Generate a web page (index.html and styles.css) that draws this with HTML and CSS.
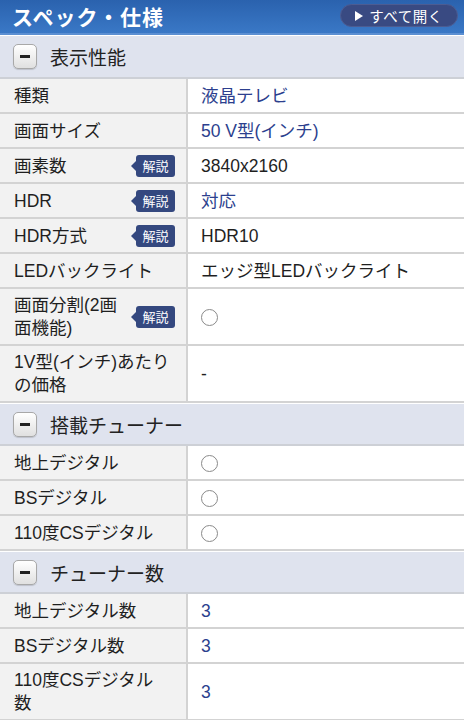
FILE: index.html
```html
<!DOCTYPE html>
<html lang="ja">
<head>
<meta charset="utf-8">
<link rel="stylesheet" href="styles.css">
</head>
<body>
<header class="topbar">
  <h1 class="title">スペック・仕様</h1>
  <button class="openall"><span class="tri"></span>すべて開く</button>
</header>

<section class="group">
  <div class="ghead first"><span class="minus"></span><span class="gtitle">表示性能</span></div>
  <div class="row"><div class="key">種類</div><div class="val link">液晶テレビ</div></div>
  <div class="row"><div class="key">画面サイズ</div><div class="val link">50 V型(インチ)</div></div>
  <div class="row"><div class="key">画素数<span class="badge">解説</span></div><div class="val">3840x2160</div></div>
  <div class="row"><div class="key">HDR<span class="badge">解説</span></div><div class="val link">対応</div></div>
  <div class="row"><div class="key">HDR方式<span class="badge">解説</span></div><div class="val">HDR10</div></div>
  <div class="row"><div class="key">LEDバックライト</div><div class="val">エッジ型LEDバックライト</div></div>
  <div class="row"><div class="key"><span class="ktext">画面分割(2画<br>面機能)</span><span class="badge">解説</span></div><div class="val"><span class="circle"></span></div></div>
  <div class="row"><div class="key">1V型(インチ)あたり<br>の価格</div><div class="val">-</div></div>
</section>

<section class="group">
  <div class="ghead"><span class="minus"></span><span class="gtitle">搭載チューナー</span></div>
  <div class="row"><div class="key">地上デジタル</div><div class="val"><span class="circle"></span></div></div>
  <div class="row"><div class="key">BSデジタル</div><div class="val"><span class="circle"></span></div></div>
  <div class="row"><div class="key">110度CSデジタル</div><div class="val"><span class="circle"></span></div></div>
</section>

<section class="group">
  <div class="ghead"><span class="minus"></span><span class="gtitle">チューナー数</span></div>
  <div class="row"><div class="key">地上デジタル数</div><div class="val link">3</div></div>
  <div class="row"><div class="key">BSデジタル数</div><div class="val link">3</div></div>
  <div class="row"><div class="key">110度CSデジタル<br>数</div><div class="val link">3</div></div>
</section>
</body>
</html>
```

FILE: styles.css
```css
* { box-sizing: border-box; }
html, body { margin: 0; padding: 0; }
body {
  width: 464px;
  background: #ffffff;
  font-family: "Liberation Sans", "Noto Sans CJK JP", sans-serif;
  color: #1f1f1f;
  overflow: hidden;
}
.topbar {
  height: 35px;
  display: flex;
  align-items: center;
  justify-content: space-between;
  padding: 0 6px 0 12px;
  background: linear-gradient(#2a62ae, #3a78c6);
  border-bottom: 2px solid #5b8fd2;
}
.title {
  margin: 0;
  font-size: 21px;
  font-weight: bold;
  color: #ffffff;
  font-family: "Noto Sans CJK JP", sans-serif;
  letter-spacing: 1px;
  line-height: 1;
}
.openall {
  height: 23px;
  width: 118px;
  margin-top: -2px;
  border-radius: 12px;
  border: 1px solid #4c5c92;
  background: #394a82;
  color: #ffffff;
  font-family: "Noto Sans CJK JP", sans-serif;
  font-size: 14.5px;
  display: flex;
  align-items: center;
  justify-content: center;
  gap: 6px;
  padding: 0;
  letter-spacing: 0.5px;
}
.tri {
  width: 0; height: 0;
  border-left: 8px solid #ffffff;
  border-top: 5px solid transparent;
  border-bottom: 5px solid transparent;
}
.ghead {
  height: 43px;
  display: flex;
  align-items: center;
  gap: 13px;
  padding-left: 13px;
  background: #dfe3ee;
  border-top: 1px solid #ffffff;
  border-bottom: 2px solid #cdd0d6;
}
.ghead.first { height: 44px; }
.minus {
  width: 24px;
  height: 25px;
  border: 1px solid #a8a8a8;
  border-radius: 5px;
  background: linear-gradient(#ffffff, #e0e0e0);
  display: flex;
  align-items: center;
  justify-content: center;
  box-shadow: 0 1px 1px rgba(0,0,0,0.15);
}
.minus::before {
  content: "";
  width: 10px;
  height: 3px;
  background: #222;
}
.gtitle {
  font-family: "Noto Sans CJK JP", sans-serif;
  font-size: 19px;
  color: #222;
}
.row {
  display: grid;
  grid-template-columns: 188px 1fr;
  border-bottom: 2px solid #d3d3d3;
  font-size: 17.5px;
  line-height: 23px;
}
.key {
  background: #f2f2f2;
  padding: 5px 11px 4px 14px;
  border-right: 2px solid #d3d3d3;
  display: flex;
  align-items: center;
  justify-content: space-between;
  min-height: 33px;
}
.val {
  padding: 5px 12px 4px 13px;
  display: flex;
  align-items: center;
  background: #ffffff;
}
.link { color: #2c3f8e; }
.badge {
  position: relative;
  flex: none;
  width: 39px;
  height: 22px;
  margin-left: 6px;
  border-radius: 3px;
  background: #34487f;
  color: #ffffff;
  font-family: "Noto Sans CJK JP", sans-serif;
  font-size: 13px;
  line-height: 22px;
  text-align: center;
}
.badge::before {
  content: "";
  position: absolute;
  left: -5px;
  top: 6px;
  border-right: 5px solid #34487f;
  border-top: 5px solid transparent;
  border-bottom: 5px solid transparent;
}
.circle {
  display: inline-block;
  width: 17px;
  height: 17px;
  border: 1px solid #8a8a8a;
  border-radius: 50%;
}
```
